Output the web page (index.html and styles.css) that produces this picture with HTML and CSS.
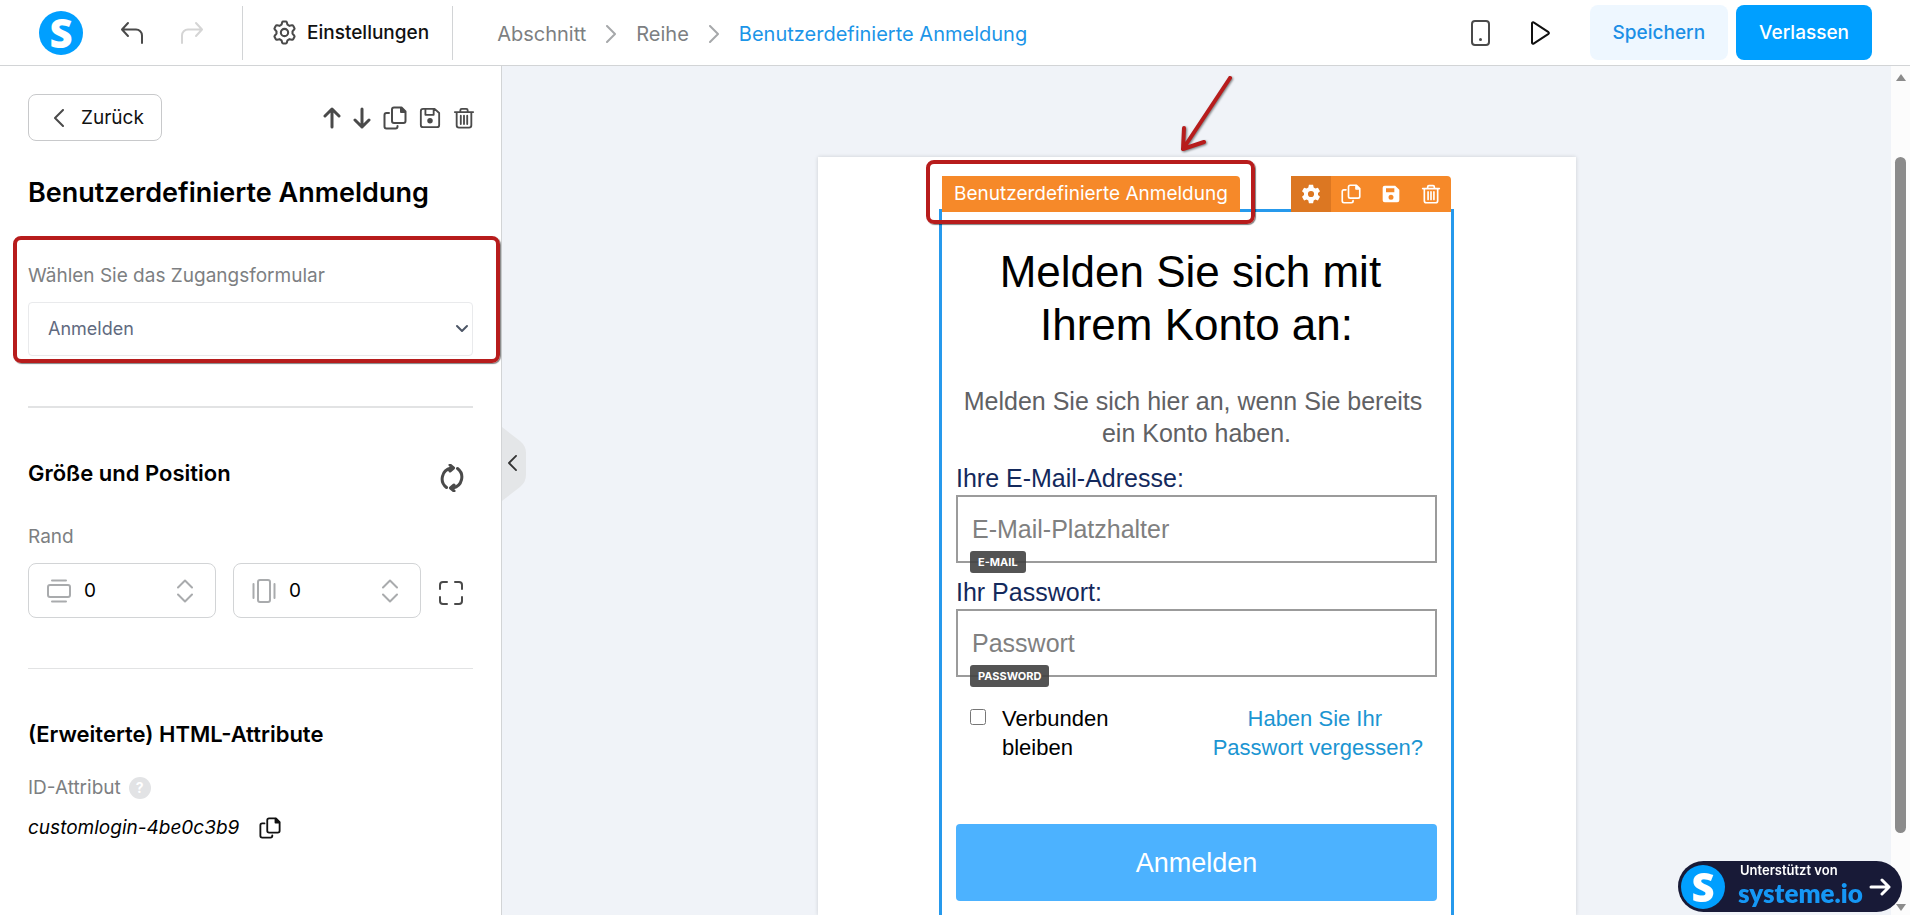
FILE: index.html
```html
<!DOCTYPE html>
<html lang="de">

<head>
    <meta charset="UTF-8">
    <meta name="viewport" content="width=device-width, initial-scale=1.0">
    <title>Benutzerdefinierte Anmeldung</title>
    <link rel="stylesheet" href="styles.css">
</head>

<body>
    <!-- Shared icons -->
    <svg class="sprite" aria-hidden="true">
        <symbol id="icon-copy" viewBox="0 0 24 24">
            <path d="M11 1.500h7.500l4 4V15a2 2 0 0 1-2 2H11a2 2 0 0 1-2-2V3.500a2 2 0 0 1 2-2z" />
            <path d="M18 2v4h4z" />
            <path d="M6 7H3.500a2 2 0 0 0-2 2v11.500a2 2 0 0 0 2 2h9a2 2 0 0 0 2-2V20" />
        </symbol>
        <symbol id="icon-trash" viewBox="0 0 24 24">
            <path d="M2 5.500h20M8 5V3.500A1.500 1.500 0 0 1 9.500 2h5A1.500 1.500 0 0 1 16 3.500V5M4 6v14a2.500 2.500 0 0 0 2.500 2.500h11A2.500 2.500 0 0 0 20 20V6M8.500 9.500v9M12 9.500v9M15.500 9.500v9" />
        </symbol>
    </svg>

    <header class="topbar">
        <a href="#" class="logo" aria-label="systeme.io">S</a>
        <button type="button" class="icon-btn undo" aria-label="Rückgängig">
            <svg viewBox="0 0 24 24"><path d="M8 2L2 8.500L8 15M2.500 8.500H16a6 6 0 0 1 6 6V22" /></svg>
        </button>
        <button type="button" class="icon-btn redo" aria-label="Wiederholen" disabled>
            <svg viewBox="0 0 24 24"><path d="M16 2l6 6.500L16 15M21.500 8.500H8a6 6 0 0 0-6 6V22" /></svg>
        </button>
        <button type="button" class="settings">
            <svg viewBox="0 0 24 24">
                <path d="M9.800 2.200a1 1 0 0 1 1-.7h2.400a1 1 0 0 1 1 .7l.7 2.300 1.900 1.100 2.400-.5a1 1 0 0 1 1.100.5l1.200 2.100a1 1 0 0 1-.1 1.200L19.700 10.900v2.200l1.700 2a1 1 0 0 1 .1 1.200l-1.200 2.100a1 1 0 0 1-1.100.5l-2.400-.5-1.900 1.100-.7 2.300a1 1 0 0 1-1 .7h-2.400a1 1 0 0 1-1-.7l-.7-2.300-1.900-1.100-2.400.5a1 1 0 0 1-1.100-.5l-1.200-2.100a1 1 0 0 1 .1-1.200l1.700-2v-2.200l-1.700-2a1 1 0 0 1-.1-1.200l1.200-2.100a1 1 0 0 1 1.100-.5l2.400.5 1.900-1.100z" />
                <circle cx="12" cy="12" r="3.500" />
            </svg>
            Einstellungen
        </button>
        <nav class="breadcrumb">
            <a href="#">Abschnitt</a>
            <svg viewBox="0 0 10 18"><path d="M1 1l8 8-8 8" /></svg>
            <a href="#">Reihe</a>
            <svg viewBox="0 0 10 18"><path d="M1 1l8 8-8 8" /></svg>
            <a href="#" class="current">Benutzerdefinierte Anmeldung</a>
        </nav>
        <button type="button" class="icon-btn phone" aria-label="Mobile Ansicht">
            <svg viewBox="0 0 20 26"><rect x="2" y="1" width="17" height="24" rx="3" /><circle cx="10.500" cy="19.500" r="1.500" class="dot" /></svg>
        </button>
        <button type="button" class="icon-btn play" aria-label="Vorschau">
            <svg viewBox="0 0 20 26"><path d="M2 3.200v19.600a1 1 0 0 0 1.600.8L18.500 13.800a1 1 0 0 0 0-1.600L3.600 2.400A1 1 0 0 0 2 3.200z" /></svg>
        </button>
        <button type="button" class="btn btn-light">Speichern</button>
        <button type="button" class="btn btn-primary">Verlassen</button>
    </header>

    <main class="editor">
        <aside class="sidebar">
            <div class="sidebar-head">
                <button type="button" class="back">
                    <svg viewBox="0 0 10 18"><path d="M9 1L1 9l8 8" /></svg>
                    Zurück
                </button>
                <div class="tools">
                    <button type="button" class="icon-btn narrow" aria-label="Nach oben"><svg viewBox="0 0 18 22"><path d="M9 20V2M2 9l7-7 7 7" /></svg></button>
                    <button type="button" class="icon-btn narrow" aria-label="Nach unten"><svg viewBox="0 0 18 22"><path d="M9 2v18M2 13l7 7 7-7" /></svg></button>
                    <button type="button" class="icon-btn" aria-label="Kopieren"><svg><use href="#icon-copy" /></svg></button>
                    <button type="button" class="icon-btn small" aria-label="Speichern">
                        <svg viewBox="0 0 24 24"><path d="M4.500 2H17l5 4.500V19.500a2.500 2.500 0 0 1-2.500 2.500h-15A2.500 2.500 0 0 1 2 19.500v-15A2.500 2.500 0 0 1 4.500 2M7 2v6.500h9V2" /><circle cx="12" cy="15" r="3" class="dot" /></svg>
                    </button>
                    <button type="button" class="icon-btn small" aria-label="Löschen"><svg><use href="#icon-trash" /></svg></button>
                </div>
            </div>

            <h1>Benutzerdefinierte Anmeldung</h1>

            <div class="field form-choice">
                <label for="access-form">Wählen Sie das Zugangsformular</label>
                <div class="select">
                    <select id="access-form">
                        <option>Anmelden</option>
                    </select>
                    <svg viewBox="0 0 14 10"><path d="M2 2l5 5 5-5" /></svg>
                </div>
                <div class="highlight highlight-form"></div>
            </div>

            <hr class="thick">

            <div class="section-head">
                <h2>Größe und Position</h2>
                <button type="button" class="icon-btn reset" aria-label="Zurücksetzen">
                    <svg viewBox="0 0 24 28"><path d="M6.500 23.500A11 11 0 0 1 11 4M17.500 4.500A11 11 0 0 1 13 24M10 1l3.500 3-3.500 3M14 21l-3.500 3 3.500 3" /></svg>
                </button>
            </div>

            <div class="field">
                <label for="margin-v">Rand</label>
                <div class="margins">
                    <div class="number">
                        <svg class="kind" viewBox="0 0 24 24"><rect x="1" y="6" width="22" height="12" rx="2" /><path d="M5 1.500h14M5 22.500h14" /></svg>
                        <input type="text" id="margin-v" value="0">
                        <button type="button" class="spin" aria-label="Ändern"><svg viewBox="0 0 16 24"><path d="M1 8.500l7-7 7 7M1 15.500l7 7 7-7" /></svg></button>
                    </div>
                    <div class="number">
                        <svg class="kind" viewBox="0 0 24 24"><rect x="6" y="1" width="12" height="22" rx="2" /><path d="M1.500 5v14M22.500 5v14" /></svg>
                        <input type="text" id="margin-h" value="0" aria-label="Rand horizontal">
                        <button type="button" class="spin" aria-label="Ändern"><svg viewBox="0 0 16 24"><path d="M1 8.500l7-7 7 7M1 15.500l7 7 7-7" /></svg></button>
                    </div>
                    <button type="button" class="icon-btn" aria-label="Alle Seiten">
                        <svg viewBox="0 0 24 24"><path d="M1 8V4a3 3 0 0 1 3-3h4M16 1h4a3 3 0 0 1 3 3v4M23 16v4a3 3 0 0 1-3 3h-4M8 23H4a3 3 0 0 1-3-3v-4" /></svg>
                    </button>
                </div>
            </div>

            <hr>

            <h2>(Erweiterte) HTML-Attribute</h2>
            <p class="attr-label">ID-Attribut <span class="help">?</span></p>
            <p class="attr-value">
                <em>customlogin-4be0c3b9</em>
                <button type="button" class="icon-btn" aria-label="ID kopieren"><svg><use href="#icon-copy" /></svg></button>
            </p>
        </aside>

        <section class="canvas">
            <button type="button" class="collapse" aria-label="Seitenleiste einklappen">
                <svg class="tab" viewBox="0 0 24 74"><path d="M0 0l18 14q6 5 6 12v22q0 7-6 12L0 74z" /></svg>
                <svg class="arrow" viewBox="0 0 10 18"><path d="M9 1L1 9l8 8" /></svg>
            </button>

            <div class="page">
                <div class="element">
                    <div class="element-bar">
                        <span class="element-name">Benutzerdefinierte Anmeldung</span>
                        <div class="element-tools">
                            <button type="button" class="active" aria-label="Einstellungen">
                                <svg viewBox="0 0 24 24" class="solid"><path fill-rule="evenodd" d="M9.500 1h5l.7 3.200 2 1.200 3.100-1 2.500 4.300-2.400 2.200v2.300l2.400 2.200-2.500 4.300-3.100-1-2 1.200-.7 3.100h-5l-.7-3.100-2-1.200-3.100 1-2.500-4.300 2.400-2.200v-2.300L1.200 8.700l2.500-4.300 3.100 1 2-1.200zM12 8.300a3.700 3.700 0 1 0 0 7.400 3.700 3.700 0 0 0 0-7.400z" /></svg>
                            </button>
                            <button type="button" aria-label="Kopieren"><svg><use href="#icon-copy" /></svg></button>
                            <button type="button" aria-label="Speichern">
                                <svg viewBox="0 0 24 24" class="solid"><path fill-rule="evenodd" d="M4.500 2H17l5 5v12.500a2.500 2.500 0 0 1-2.500 2.500h-15A2.500 2.500 0 0 1 2 19.500v-15A2.500 2.500 0 0 1 4.500 2zM6 5v5h10V5zM12 13a3 3 0 1 0 0 6 3 3 0 0 0 0-6z" /></svg>
                            </button>
                            <button type="button" aria-label="Löschen"><svg><use href="#icon-trash" /></svg></button>
                        </div>
                        <div class="highlight highlight-name"></div>
                        <svg class="pointer" viewBox="0 0 60 84"><path d="M53 6L6 77M7 56L6 77L27 70" /></svg>
                    </div>

                    <form class="login">
                        <h3>Melden Sie sich mit&nbsp;<br>Ihrem Konto an:</h3>
                        <p>Melden Sie sich hier an, wenn Sie bereits&nbsp;<br>ein Konto haben.</p>
                        <label for="email">Ihre E-Mail-Adresse:</label>
                        <div class="input-wrap">
                            <input type="email" id="email" placeholder="E-Mail-Platzhalter">
                            <span class="tag">E-MAIL</span>
                        </div>
                        <label for="password">Ihr Passwort:</label>
                        <div class="input-wrap">
                            <input type="password" id="password" placeholder="Passwort">
                            <span class="tag">PASSWORD</span>
                        </div>
                        <div class="options">
                            <input type="checkbox" id="remember">
                            <label for="remember">Verbunden<br>bleiben</label>
                            <a href="#">Haben Sie Ihr&nbsp;<br>Passwort vergessen?</a>
                        </div>
                        <button type="submit">Anmelden</button>
                    </form>
                </div>
            </div>
        </section>

        <div class="scrollbar">
            <div class="scroll-up"></div>
            <div class="thumb"></div>
            <div class="scroll-down"></div>
        </div>
    </main>

    <a href="#" class="powered">
        <span class="logo">S</span>
        <span class="powered-text">
            <small>Unterstützt von</small>
            <strong>systeme.io</strong>
        </span>
        <svg viewBox="0 0 22 18"><path d="M2 9h18M13 2l7 7-7 7" /></svg>
    </a>
</body>

</html>
```
FILE: styles.css
```css
* {
    margin: 0;
    padding: 0;
    box-sizing: border-box;
}

body {
    height: 100vh;
    display: flex;
    flex-direction: column;
    overflow: hidden;
    font-family: Inter, sans-serif;
    font-size: 19px;
    line-height: 24px;
    color: #111;
    background: #fff;
}

button,
input,
select {
    font: inherit;
    color: inherit;
    background: none;
    border: none;
    outline: none;
}

button {
    cursor: pointer;
}

a {
    color: inherit;
    text-decoration: none;
}

svg {
    display: block;
    fill: none;
    stroke: currentColor;
    stroke-width: 2;
    stroke-linecap: round;
    stroke-linejoin: round;
}

svg .dot,
svg.solid {
    fill: currentColor;
    stroke: none;
}

.sprite {
    position: absolute;
    width: 0;
    height: 0;
}

.icon-btn {
    flex: none;
    color: #4a4a4a;
}

.icon-btn svg {
    width: 24px;
    height: 24px;
}

/* Top bar */
.topbar {
    flex: none;
    display: flex;
    align-items: center;
    height: 66px;
    padding: 0 38px 0 39px;
    border-bottom: 1px solid #d2d4d6;
}

.logo {
    flex: none;
    width: 44px;
    height: 44px;
    border-radius: 50%;
    background: #009fff;
    color: #fff;
    font-family: "Open Sans", sans-serif;
    font-size: 40px;
    font-weight: 800;
    line-height: 44px;
    text-align: center;
}

.undo {
    margin-left: 37px;
}

.redo {
    margin: 0 38px 0 36px;
    color: #d5d5d5;
}

.settings {
    display: flex;
    align-items: center;
    gap: 10px;
    height: 54px;
    padding: 0 23px 0 29px;
    border-left: 1px solid #d2d4d6;
    border-right: 1px solid #d2d4d6;
    font-weight: 500;
}

.settings svg {
    width: 25px;
    height: 25px;
    color: #4a4a4a;
}

.breadcrumb {
    flex: 1;
    display: flex;
    align-items: center;
    gap: 20px;
    padding: 2px 0 0 44px;
    font-size: 20px;
    color: #7d7f82;
}

.breadcrumb svg {
    width: 10px;
    height: 18px;
    color: #a6a8aa;
}

.breadcrumb .current {
    color: #1c95e8;
}

.phone svg,
.play svg {
    width: 20px;
    height: 26px;
}

.play {
    margin: 0 40px;
    color: #111;
}

.btn {
    height: 55px;
    padding: 0 23px;
    border-radius: 8px;
    font-weight: 500;
}

.btn-light {
    margin-right: 8px;
    background: #eef7ff;
    color: #1c8fe6;
}

.btn-primary {
    background: #009fff;
    color: #fff;
}

/* Sidebar */
.editor {
    flex: 1;
    display: flex;
    min-height: 0;
}

.sidebar {
    flex: none;
    width: 502px;
    padding: 28px 28px 0;
    border-right: 1px solid #d2d4d6;
}

.sidebar-head {
    display: flex;
    align-items: center;
    justify-content: space-between;
}

.back {
    display: flex;
    align-items: center;
    gap: 17px;
    height: 47px;
    padding: 0 17px 0 25px;
    border: 1px solid #c8c9cb;
    border-radius: 8px;
}

.back svg {
    width: 10px;
    height: 18px;
    color: #4a4a4a;
}

.tools {
    display: flex;
    align-items: center;
    gap: 12px;
    margin-right: -2px;
}

.tools .narrow svg {
    width: 18px;
    height: 22px;
    stroke-width: 3;
}

.tools .small svg {
    width: 22px;
    height: 22px;
}

h1 {
    margin-top: 34px;
    font-size: 27px;
    font-weight: 600;
    line-height: 36px;
    color: #000;
}

h2 {
    font-size: 22px;
    font-weight: 600;
    line-height: 28px;
    color: #000;
}

.field label {
    display: block;
    margin-bottom: 14px;
    color: #7d7f82;
}

.form-choice {
    position: relative;
    margin-top: 53px;
}

.select {
    position: relative;
}

.select select {
    display: block;
    width: 100%;
    height: 54px;
    padding: 0 19px;
    border: 1px solid #e9eaec;
    border-radius: 4px;
    appearance: none;
    font-size: 18px;
    color: #616a7f;
}

.select svg {
    position: absolute;
    right: 4px;
    top: 22px;
    width: 14px;
    height: 10px;
    color: #4d5666;
    pointer-events: none;
}

.highlight {
    position: absolute;
    border: 4px solid #b71c1c;
    border-radius: 8px;
    box-shadow: 1px 1px 1px rgba(0, 0, 0, 0.5);
    pointer-events: none;
}

.highlight-form {
    inset: -28px -27px -7px -15px;
}

hr {
    margin: 50px 0 51px;
    border: none;
    border-top: 1px solid #e2e3e4;
}

hr.thick {
    border-top-width: 2px;
}

.section-head {
    display: flex;
    justify-content: space-between;
    height: 66px;
}

.reset {
    align-self: flex-start;
    margin: 5px 9px 0 0;
}

.reset svg {
    height: 28px;
    stroke-width: 3;
}

.margins {
    display: flex;
    align-items: center;
    gap: 17px;
}

.number {
    flex: 1;
    display: flex;
    align-items: center;
    min-width: 0;
    height: 55px;
    padding: 0 22px 0 18px;
    border: 1px solid #d2d4d6;
    border-radius: 8px;
    color: #000;
}

.number svg {
    height: 24px;
    color: #a9abad;
}

.number .kind {
    flex: none;
    width: 24px;
}

.number input {
    flex: 1;
    min-width: 0;
    padding-left: 13px;
}

.spin svg {
    width: 16px;
}

.margins .icon-btn {
    margin: 4px 10px 0 1px;
}

.attr-label {
    display: flex;
    align-items: center;
    gap: 8px;
    margin-top: 28px;
    color: #7d7f82;
}

.help {
    width: 22px;
    height: 22px;
    border-radius: 50%;
    background: #e2e3e5;
    color: #fff;
    font-size: 14px;
    font-weight: 700;
    line-height: 22px;
    text-align: center;
}

.attr-value {
    display: flex;
    align-items: center;
    gap: 20px;
    margin-top: 16px;
    color: #000;
}

.attr-value .icon-btn {
    color: #111;
}

.attr-value svg {
    width: 22px;
    height: 22px;
}

/* Canvas */
.canvas {
    position: relative;
    flex: 1;
    display: flex;
    justify-content: center;
    min-width: 0;
    padding-top: 91px;
    background: #f0f3f8;
}

.collapse {
    position: absolute;
    left: 0;
    top: 361px;
    width: 24px;
    height: 74px;
    color: #333;
}

.collapse .tab {
    width: 24px;
    height: 74px;
    fill: #e4e6e8;
    stroke: none;
}

.collapse .arrow {
    position: absolute;
    left: 6px;
    top: 28px;
    width: 9px;
    height: 16px;
}

.page {
    width: 758px;
    padding-top: 52px;
    background: #fff;
    box-shadow: 0 0 4px rgba(0, 0, 0, 0.15);
}

.element {
    position: relative;
    width: 515px;
    height: 100%;
    margin: 0 auto;
    border: 3px solid #2699ec;
    border-bottom: none;
}

.element-bar {
    position: absolute;
    left: 0;
    right: 0;
    bottom: 100%;
    display: flex;
    justify-content: space-between;
    height: 36px;
    color: #fff;
}

.element-name {
    padding: 0 12px;
    border-top-right-radius: 4px;
    background: #f68929;
    line-height: 36px;
}

.element-tools {
    display: flex;
    border-top-right-radius: 4px;
    background: #f68929;
}

.element-tools button {
    width: 40px;
    height: 36px;
    padding: 0 10px;
}

.element-tools .active {
    background: #dc7722;
}

.element-tools svg {
    width: 20px;
    height: 20px;
}

.highlight-name {
    left: -16px;
    top: -16px;
    width: 329px;
    height: 64px;
}

.pointer {
    position: absolute;
    left: 235px;
    top: -104px;
    width: 60px;
    height: 84px;
    color: #b71c1c;
    stroke-width: 4;
    filter: drop-shadow(1px 1px 1px rgba(0, 0, 0, 0.5));
}

/* Login form */
.login {
    padding: 33px 14px 0;
    font-family: "Liberation Sans", Arial, sans-serif;
    font-size: 25px;
    line-height: 32px;
    color: #000;
}

.login h3 {
    font-size: 44px;
    font-weight: 400;
    line-height: 53px;
    text-align: center;
}

.login p {
    margin-top: 34px;
    color: #606164;
    text-align: center;
}

.login > label {
    display: block;
    margin: 13px 0 1px;
    color: #13295c;
}

.input-wrap {
    position: relative;
}

.input-wrap input {
    display: block;
    width: 100%;
    height: 68px;
    padding: 0 14px;
    border: 2px solid #9b9b9b;
}

.input-wrap input::placeholder {
    color: #808080;
}

.tag {
    position: absolute;
    left: 14px;
    bottom: -10px;
    padding: 0 8px;
    border-radius: 3px;
    background: rgba(65, 65, 65, 0.9);
    color: #fff;
    font-family: Inter, sans-serif;
    font-size: 11px;
    font-weight: 700;
    line-height: 22px;
}

.options {
    display: flex;
    align-items: flex-start;
    margin-top: 27px;
    padding: 0 14px;
    font-size: 22px;
    line-height: 29px;
}

.options input {
    width: 16px;
    height: 16px;
    margin: 5px 16px 0 0;
}

.options a {
    margin-left: auto;
    color: #1b95d2;
    text-align: center;
}

.login button {
    display: block;
    width: 100%;
    height: 77px;
    margin-top: 62px;
    border-radius: 4px;
    background: #4cb2ff;
    color: #fff;
    font-size: 27px;
}

/* Scrollbar */
.scrollbar {
    flex: none;
    display: flex;
    flex-direction: column;
    align-items: center;
    width: 19px;
    padding: 8px 0 4px;
    background: #fcfcfc;
}

.scroll-up,
.scroll-down {
    border: 5px solid transparent;
}

.scroll-up {
    border-top: none;
    border-bottom: 7px solid #8b8b8b;
}

.scroll-down {
    border-bottom: none;
    border-top: 7px solid #8b8b8b;
}

.thumb {
    flex: 1;
    width: 11px;
    margin: 76px 0 71px;
    border-radius: 6px;
    background: #8b8b8b;
}

/* Badge */
.powered {
    position: fixed;
    right: 8px;
    bottom: 3px;
    display: flex;
    align-items: center;
    width: 224px;
    height: 51px;
    padding: 0 11px 0 3px;
    border-radius: 26px;
    background: #181a37;
    color: #fff;
}

.powered-text {
    flex: 1;
    padding: 0 0 3px 13px;
}

.powered small,
.powered strong {
    display: block;
}

.powered small {
    padding-left: 2px;
    font-size: 13px;
    font-weight: 600;
    line-height: 16px;
}

.powered strong {
    font-family: Lato, sans-serif;
    font-size: 26px;
    font-weight: 800;
    line-height: 30px;
    color: #1597f5;
}

.powered svg {
    width: 22px;
    height: 18px;
    stroke-width: 3;
}
```
